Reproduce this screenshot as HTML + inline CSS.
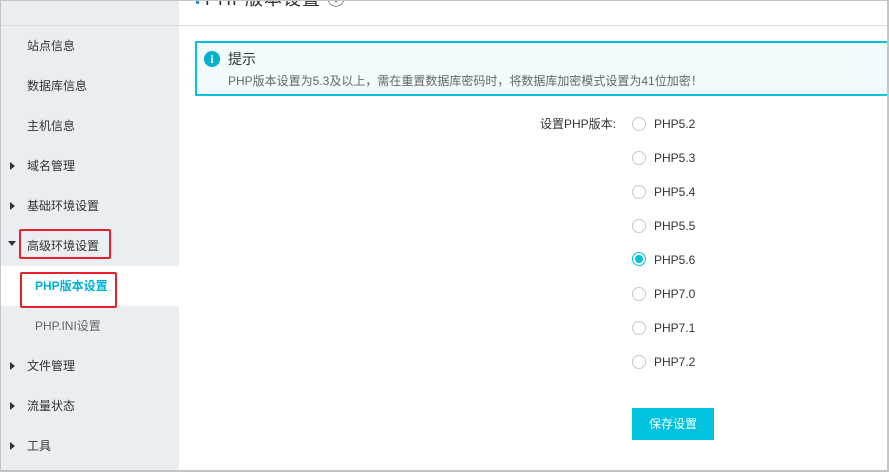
<!DOCTYPE html>
<html><head><meta charset="utf-8"><style>
*{margin:0;padding:0;box-sizing:border-box}
body{width:889px;height:472px;position:relative;overflow:hidden;background:#fff;font-family:"Liberation Sans","Noto Sans CJK SC",sans-serif;color:#333;font-size:12px}
.frame{position:absolute;left:0;top:0;width:889px;height:472px;border:1px solid #c4c4c4;border-bottom-width:2px;border-right-width:2px;pointer-events:none;z-index:5}
.side{position:absolute;left:1px;top:0;width:178px;height:472px;background:#eaedf1}
.hdr{position:absolute;left:0;top:25px;width:889px;height:1px;background:#dadde2}
.it{position:absolute;left:27px;height:20px;line-height:20px;font-size:12px;color:#333}
.tri{position:absolute;left:10px;width:0;height:0;border-top:4px solid transparent;border-bottom:4px solid transparent;border-left:5px solid #333}
.act{position:absolute;left:1px;top:266px;width:178px;height:40px;background:#fff}
.red{position:absolute;border:2px solid #e8202a;border-radius:2px}
.alert{position:absolute;left:195px;top:41px;width:700px;height:55px;border:2px solid #00c1de;background:#f1fafd}
.ic{position:absolute;left:7px;top:8px;width:16px;height:16px;border-radius:50%;background:#00b0cf;color:#fff;font-weight:bold;font-size:12px;text-align:center;line-height:16px;font-family:"Liberation Serif",serif}
.r{position:absolute;left:632px;width:14px;height:14px;border:1px solid #c8c8c8;border-radius:50%;background:#fff}
.rl{position:absolute;left:654px;font-size:12px;line-height:16px;color:#333}
.btn{position:absolute;left:632px;top:408px;width:82px;height:32px;background:#00c1de;color:#fff;text-align:center;line-height:32px;font-size:12px}
</style></head><body>
<div class="side"></div>
<div class="hdr"></div>
<div style="position:absolute;left:196px;top:-15px;font-size:18px;color:#333;letter-spacing:1px"><span style="display:inline-block;width:3px;height:5px;background:#2a8ee0;vertical-align:top;margin-top:14px"></span> PHP版本设置 ⓘ</div>
<div class="act"></div>
<div class="it" style="top:36px">站点信息</div>
<div class="it" style="top:76px">数据库信息</div>
<div class="it" style="top:116px">主机信息</div>
<div class="tri" style="top:162px"></div><div class="it" style="top:156px">域名管理</div>
<div class="tri" style="top:202px"></div><div class="it" style="top:196px">基础环境设置</div>
<div style="position:absolute;left:8px;top:241px;border-left:4px solid transparent;border-right:4px solid transparent;border-top:5px solid #333"></div><div class="it" style="top:236px">高级环境设置</div>
<div class="it" style="top:276px;left:35px;color:#00b0d8;font-weight:bold">PHP版本设置</div>
<div class="it" style="top:316px;left:35px;color:#666">PHP.INI设置</div>
<div class="tri" style="top:362px"></div><div class="it" style="top:356px">文件管理</div>
<div class="tri" style="top:402px"></div><div class="it" style="top:396px">流量状态</div>
<div class="tri" style="top:442px"></div><div class="it" style="top:436px">工具</div>
<div class="red" style="left:19px;top:229px;width:92px;height:30px"></div>
<div class="red" style="left:20px;top:272px;width:97px;height:36px"></div>
<div class="alert"><div class="ic">i</div>
<div style="position:absolute;left:31px;top:6px;font-size:14px;color:#333">提示</div>
<div style="position:absolute;left:31px;top:29px;font-size:12px;color:#666">PHP版本设置为5.3及以上，需在重置数据库密码时，将数据库加密模式设置为41位加密！</div></div>
<div style="position:absolute;left:540px;top:116px;font-size:12px;line-height:16px">设置PHP版本:</div>
<div class="r" style="top:117px"></div><div class="rl" style="top:116px">PHP5.2</div>
<div class="r" style="top:151px"></div><div class="rl" style="top:150px">PHP5.3</div>
<div class="r" style="top:185px"></div><div class="rl" style="top:184px">PHP5.4</div>
<div class="r" style="top:219px"></div><div class="rl" style="top:218px">PHP5.5</div>
<div class="r" style="top:252px;border-color:#00c1de"><div style="position:absolute;left:2px;top:2px;width:8px;height:8px;border-radius:50%;background:#00c1de"></div></div><div class="rl" style="top:252px">PHP5.6</div>
<div class="r" style="top:287px"></div><div class="rl" style="top:286px">PHP7.0</div>
<div class="r" style="top:321px"></div><div class="rl" style="top:320px">PHP7.1</div>
<div class="r" style="top:355px"></div><div class="rl" style="top:354px">PHP7.2</div>
<div class="btn">保存设置</div>
<div class="frame"></div>
</body></html>
